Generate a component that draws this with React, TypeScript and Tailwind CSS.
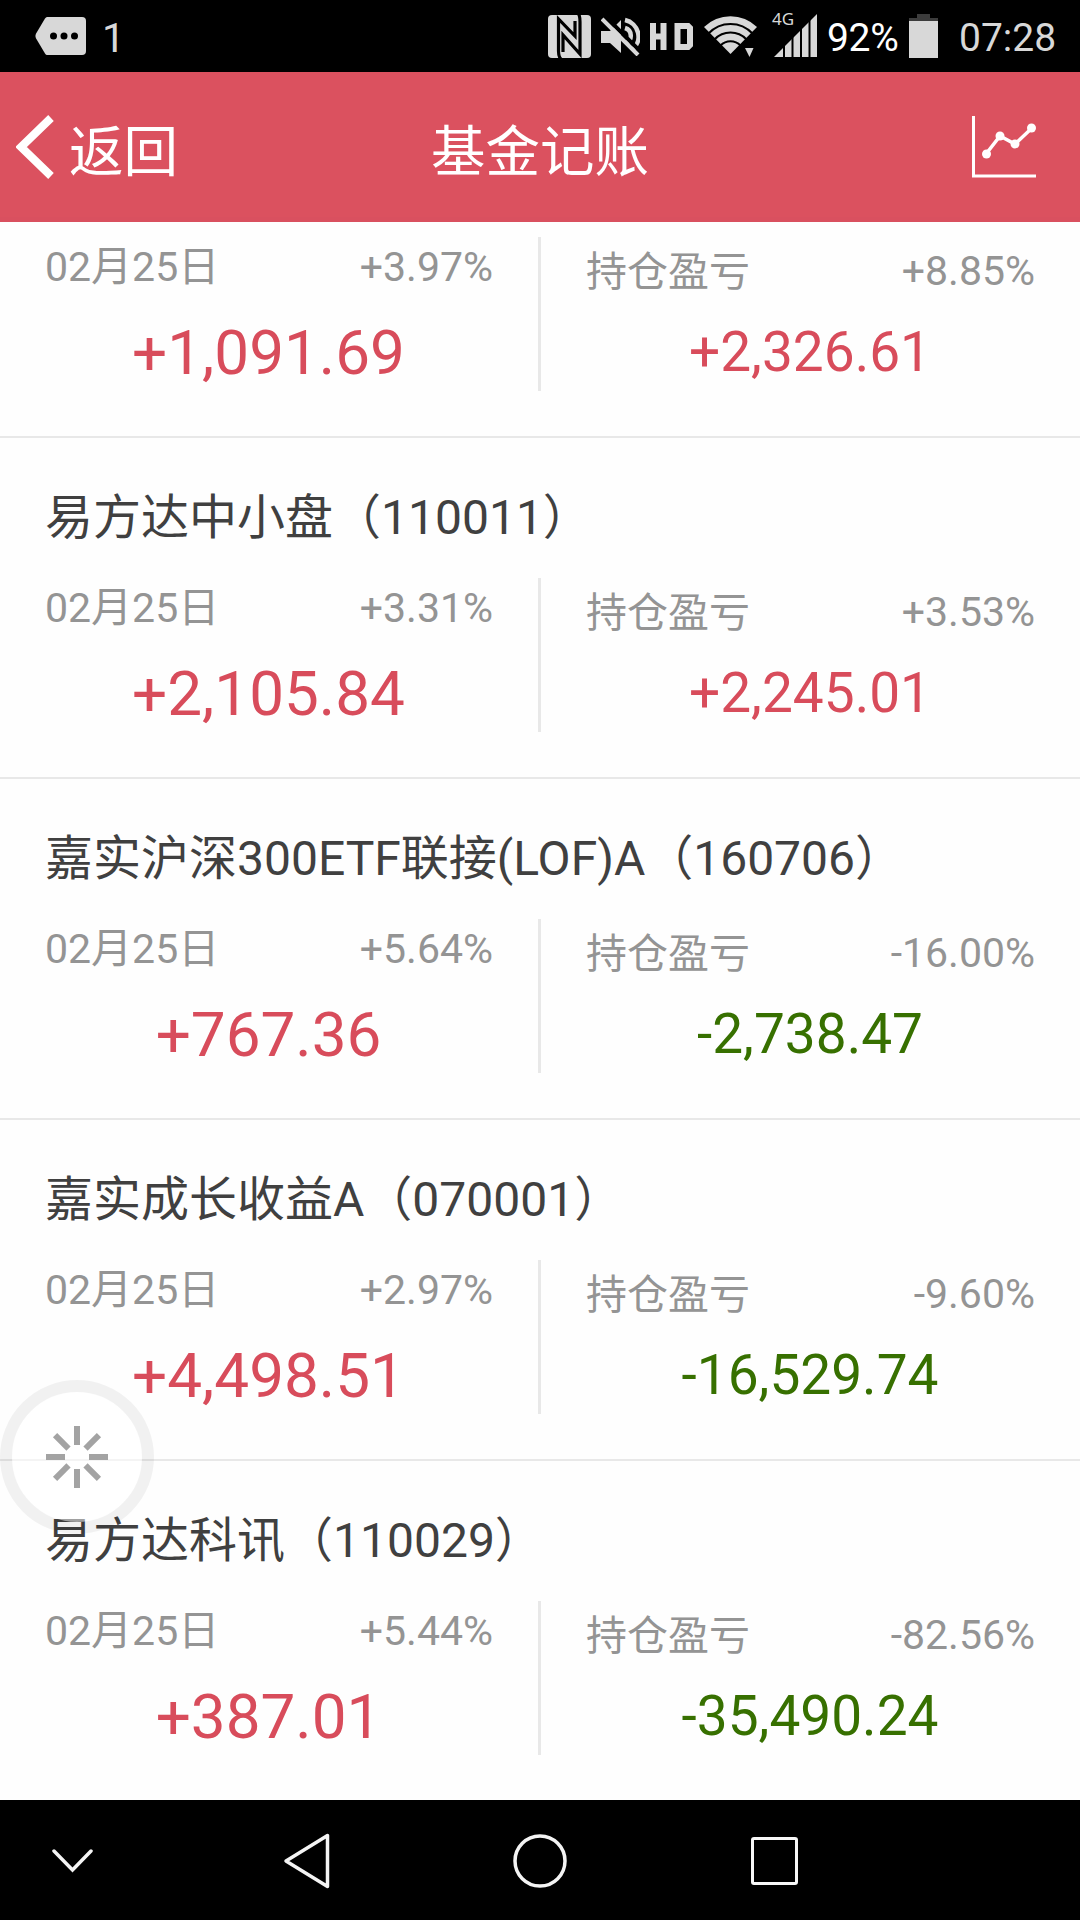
import React from "react";

type Fund = {
  name?: string;
  dayRate: string;
  dayGain: string;
  holdRate: string;
  holdGain: string;
};

const funds: Fund[] = [
  { dayRate: "+3.97%", dayGain: "+1,091.69", holdRate: "+8.85%", holdGain: "+2,326.61" },
  { name: "易方达中小盘（110011）", dayRate: "+3.31%", dayGain: "+2,105.84", holdRate: "+3.53%", holdGain: "+2,245.01" },
  { name: "嘉实沪深300ETF联接(LOF)A（160706）", dayRate: "+5.64%", dayGain: "+767.36", holdRate: "-16.00%", holdGain: "-2,738.47" },
  { name: "嘉实成长收益A（070001）", dayRate: "+2.97%", dayGain: "+4,498.51", holdRate: "-9.60%", holdGain: "-16,529.74" },
  { name: "易方达科讯（110029）", dayRate: "+5.44%", dayGain: "+387.01", holdRate: "-82.56%", holdGain: "-35,490.24" },
];

const tone = (v: string) => (v.startsWith("-") ? "text-[#377000]" : "text-[#d84c5b]");

function StatusBar() {
  return (
    <div className="flex h-[72px] shrink-0 items-start bg-black text-[#d8d8d8]">
      <svg className="ml-[35px] mt-[17px] h-[38px] w-[51px]" viewBox="0 0 51 38">
        <path d="M12 0H47a4 4 0 0 1 4 4V34a4 4 0 0 1-4 4H12Q11 38 10 36.500L.8 21Q0 19 .8 17L10 1.500Q11 0 12 0Z" fill="#d8d8d8" />
        <circle cx="18.500" cy="19" r="3.500" fill="#000" />
        <circle cx="29" cy="19" r="3.500" fill="#000" />
        <circle cx="39.500" cy="19" r="3.500" fill="#000" />
      </svg>
      <span className="ml-[16px] mt-[13px] text-[41px] leading-[50px]">1</span>

      <svg className="ml-auto mt-[15px] h-[43px] w-[43px]" viewBox="0 0 43 43">
        <rect width="43" height="43" rx="4" fill="#d8d8d8" />
        <path d="M13 44Q10.500 42 10.500 36V4L27 21V6M30.500 -1Q32 1 32 7V39L15 20V37" fill="none" stroke="#000" strokeWidth="3.200" />
      </svg>
      <svg className="ml-[10px] mt-[17px] h-[39px] w-[39px]" viewBox="0 0 39 39">
        <path d="M0 14H9L20 3V36L9 26H0Z" fill="#d8d8d8" />
        <path d="M24 3A17 17 0 0 1 31 33M24 11A8 8 0 0 1 25 26" fill="none" stroke="#d8d8d8" strokeWidth="4.500" />
        <path d="M4 -1L40 35" stroke="#000" strokeWidth="4" />
        <path d="M1 2L37 38" stroke="#d8d8d8" strokeWidth="4" />
      </svg>
      <svg className="ml-[10px] mt-[23px] h-[27px] w-[43px]" viewBox="0 0 43 27">
        <path d="M3 0V27M13.500 0V27M3 13.500H13.500" fill="none" stroke="#d8d8d8" strokeWidth="6" />
        <path d="M27.500 3H38L40 5V22L38 24H27.500Z" fill="none" stroke="#d8d8d8" strokeWidth="6" />
      </svg>
      <svg className="ml-[11px] mt-[16px] h-[41px] w-[54px]" viewBox="0 0 54 41">
        <path d="M26.500 38L0 11A38 38 0 0 1 53 11Z" fill="#d8d8d8" />
        <path d="M4.500 17.500A30 30 0 0 1 48.500 17.500M10.500 23.500A22 22 0 0 1 42.500 23.500M16.500 29.500A14 14 0 0 1 36.500 29.500" fill="none" stroke="#000" strokeWidth="2" />
        <path d="M41 32H49.500L45.500 41Z" fill="#d8d8d8" />
      </svg>
      <div className="relative ml-[14px] mt-[12px] h-[46px] w-[46px]">
        <svg className="h-[46px] w-[46px]" viewBox="0 0 46 46">
          <path d="M2 45L45 2V45Z" fill="#d8d8d8" />
          <path d="M12 0V46M20.500 0V46M29 0V46M37.500 0V46" stroke="#000" strokeWidth="2" />
        </svg>
        <span className="absolute left-0 top-0 font-['Noto_Sans'] text-[17px] leading-[13px]">4G</span>
      </div>
      <span className="ml-[9px] mt-[13px] w-[74px] text-[39px] leading-[50px] tracking-[-0.3px] text-white">92%</span>
      <svg className="ml-[8px] mt-[14px] h-[44px] w-[29px]" viewBox="0 0 29 44">
        <path d="M8 0H21V4H29V8H0V4H8Z" fill="#3c3c3c" />
        <path d="M0 7H29V44H0Z" fill="#d8d8d8" />
      </svg>
      <span className="ml-[21px] mr-[24px] mt-[13px] w-[97px] text-[39px] leading-[50px]">07:28</span>
    </div>
  );
}

function Header() {
  return (
    <header className="grid h-[150px] shrink-0 grid-cols-3 items-center border-b-[5px] border-[#d9505f] bg-[#db515f] pt-[5px] text-[54.5px] leading-[70px] text-white">
      <div className="flex items-center">
        <svg className="ml-[16px] h-[66px] w-[39px]" viewBox="0 0 39 66">
          <path d="M35 4L5 33L35 62" fill="none" stroke="#fff" strokeWidth="8" />
        </svg>
        <span className="ml-[14px] pt-[9px]">返回</span>
      </div>
      <h1 className="pt-[9px] text-center">基金记账</h1>
      <svg className="mr-[44px] h-[62px] w-[64px] justify-self-end" viewBox="0 0 64 62">
        <path d="M1.500 0V60H64" fill="none" stroke="#fff" strokeWidth="3" />
        <path d="M14 38L28 20L43 28L60 12" fill="none" stroke="#fff" strokeWidth="3.500" />
        <circle cx="14.500" cy="38" r="4.500" fill="#fff" />
        <circle cx="28" cy="20" r="4.500" fill="#fff" />
        <circle cx="43" cy="28" r="4.500" fill="#fff" />
        <circle cx="59.500" cy="12" r="4.500" fill="#fff" />
      </svg>
    </header>
  );
}

function FundRow({ fund }: { fund: Fund }) {
  return (
    <section className="shrink-0 border-b-2 border-[#e8e8e8] pb-[45px] last:border-white">
      {fund.name ? (
        <h2 className="h-[140px] whitespace-nowrap pl-[45px] pt-[50px] text-[48px] leading-[60px] text-[#404040]">{fund.name}</h2>
      ) : (
        <div className="h-[15px]" />
      )}
      <div className="flex h-[154px] text-[41px] leading-[48px] text-[#949494]">
        <div className="w-[538px] pl-[45px] pr-[45px] pt-[6px]">
          <div className="flex justify-between">
            <span>02月25日</span>
            <span>{fund.dayRate}</span>
          </div>
          <div className={`mt-[27px] pr-px text-center text-[62px] leading-[70px] ${tone(fund.dayGain)}`}>{fund.dayGain}</div>
        </div>
        <div className="w-[3px] bg-[#e8e8e8]" />
        <div className="w-[539px] pl-[45px] pr-[45px] pt-[10px]">
          <div className="flex justify-between">
            <span className="relative top-px">持仓盈亏</span>
            <span>{fund.holdRate}</span>
          </div>
          <div className={`mt-[22px] pr-px text-center text-[55px] leading-[70px] ${tone(fund.holdGain)}`}>{fund.holdGain}</div>
        </div>
      </div>
    </section>
  );
}

function FloatingButton() {
  return (
    <svg className="absolute left-0 top-[1380px] h-[154px] w-[154px]" viewBox="0 0 154 154">
      <circle cx="77" cy="77" r="65" fill="#fff" fillOpacity="0.5" />
      <circle cx="77" cy="77" r="71" fill="none" stroke="#000" strokeOpacity="0.05" strokeWidth="12" />
      <g stroke="#a3a3a3" strokeWidth="6">
        {[0, 45, 90, 135, 180, 225, 270, 315].map((a) => (
          <path key={a} d="M77 46V65" transform={`rotate(${a} 77 77)`} />
        ))}
      </g>
    </svg>
  );
}

function NavBar() {
  return (
    <nav className="flex h-[120px] shrink-0 items-center bg-black pt-[2px]">
      <svg className="ml-[51px] h-[24px] w-[43px]" viewBox="0 0 43 24" fill="none" stroke="#f4f4f4" strokeWidth="3.500" strokeLinecap="round">
        <path d="M3 2L21.500 21L40 2" />
      </svg>
      <svg className="ml-[189px] h-[56px] w-[48px]" viewBox="0 0 48 56" fill="none" stroke="#f4f4f4" strokeWidth="3.500" strokeLinejoin="round">
        <path d="M44.500 2.500V53.500L3 28Z" />
      </svg>
      <svg className="ml-[182px] h-[54px] w-[54px]" viewBox="0 0 54 54" fill="none" stroke="#f4f4f4" strokeWidth="3.500">
        <circle cx="27" cy="27" r="25" />
      </svg>
      <div className="ml-[184px] h-[48px] w-[47px] rounded-[3px] border-[3.5px] border-[#f8f8f8]" />
    </nav>
  );
}

export default function App() {
  return (
    <div className="relative flex h-[1920px] w-[1080px] flex-col overflow-hidden bg-[#fefefe] font-[Roboto,'Noto_Sans_CJK_SC',sans-serif]">
      <StatusBar />
      <Header />
      <main className="flex h-[1578px] shrink-0 flex-col overflow-hidden">
        {funds.map((f) => (
          <FundRow key={f.holdGain} fund={f} />
        ))}
      </main>
      <NavBar />
      <FloatingButton />
    </div>
  );
}
